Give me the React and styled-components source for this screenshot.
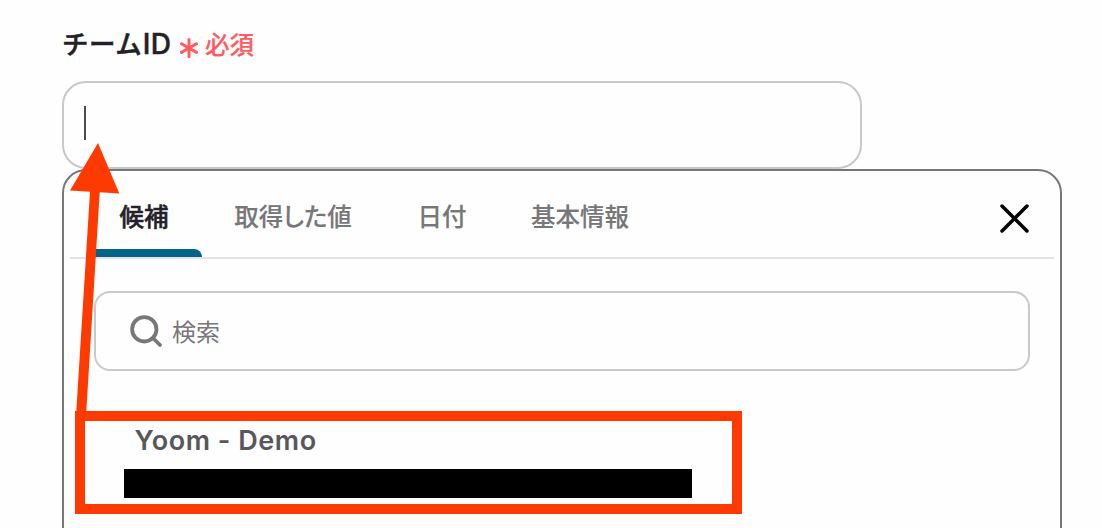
import styled, { createGlobalStyle } from "styled-components";


const tabs = [
    { label: "候補", width: 116, active: true },
    { label: "取得した値", width: 182 },
    { label: "日付", width: 116 },
    { label: "基本情報", width: 160 },
];


const App = () => {
    return <Page>
        <GlobalStyle />

        <FieldLabel>
            <LabelText>チーム<Latin>ID</Latin></LabelText>
            <Asterisk viewBox="0 0 18 20">
                <path d="M9 1.5v17M1.5 5.8l15 8.6M16.5 5.8l-15 8.6" />
            </Asterisk>
            <RequiredText>必須</RequiredText>
        </FieldLabel>

        <TextField><Caret /></TextField>

        <Dropdown>
            <TabBar>
                <TabList>
                    {tabs.map((tab) => (
                        <Tab key={tab.label} $width={tab.width} $active={tab.active}>{tab.label}</Tab>
                    ))}
                </TabList>
                <CloseButton aria-label="close">
                    <svg width="29" height="29" viewBox="0 0 29 29">
                        <path d="M2 2l25 25M27 2L2 27" />
                    </svg>
                </CloseButton>
            </TabBar>

            <SearchBox>
                <SearchIcon viewBox="0 0 34 34">
                    <circle cx="15.3" cy="15.3" r="12.2" />
                    <path d="M24 24l7 7" />
                </SearchIcon>
                <SearchText>検索</SearchText>
            </SearchBox>

            <Option>
                <OptionName>Yoom - Demo</OptionName>
                <Redacted />
            </Option>
        </Dropdown>

        {/* annotations over the form */}
        <Arrow viewBox="0 0 60 280">
            <path d="M33 3L54.3 53.5L34.7 52.3L21 276L11 276L25 51.7L5 50.5Z" />
        </Arrow>
        <Highlight />
    </Page>
}

export default App;

const GlobalStyle = createGlobalStyle`
*{
    box-sizing: border-box;
}
body{
    margin: 0;
    background: #fefefe;
    font-family: "Noto Sans CJK JP", sans-serif;
    overflow: hidden;
}`;

const Page = styled.div`
position: relative;
width: 1102px;
height: 528px;
padding: 24px 40px 0 62px;
overflow: hidden;
`;

const FieldLabel = styled.div`
display: flex;
align-items: center;
height: 40px;
margin-bottom: 17px;
`;

const LabelText = styled.span`
width: 118px;
margin-bottom: 2px;
font-size: 26.5px;
font-weight: 500;
line-height: 40px;
letter-spacing: 0.5px;
color: #222127;
white-space: nowrap;
-webkit-text-stroke: 0.5px #222127;
`;

const Latin = styled.span`
margin-left: 0.5px;
font-family: Inter, sans-serif;
font-size: 28px;
font-weight: 500;
letter-spacing: 0.4px;
`;

const Asterisk = styled.svg`
width: 18px;
height: 20px;
margin: 8px 7px 0 0;
fill: none;
stroke: #ff5b61;
stroke-width: 3;
stroke-linecap: round;
`;

const RequiredText = styled.span`
font-size: 24.5px;
font-weight: 500;
line-height: 40px;
color: #ff5b61;
-webkit-text-stroke: 0.2px #ff5b61;
`;

const TextField = styled.div`
width: 800px;
height: 88px;
padding: 23px 20px;
border: 2px solid #c9c7cb;
border-radius: 24px;
`;

const Caret = styled.div`
width: 2px;
height: 34px;
background: #4c4b50;
`;

const Dropdown = styled.div`
width: 1000px;
height: 420px;
border: 2px solid #777679;
border-radius: 24px;
background: #fefefe;
`;

const TabBar = styled.div`
display: flex;
justify-content: space-between;
height: 88px;
margin: 0 6px;
padding: 0 25.5px 0 16px;
border-bottom: 2px solid #e3e3e4;
`;

const TabList = styled.div`
display: flex;
`;

const Tab = styled.div`
width: ${(props) => props.$width}px;
padding-top: 25px;
text-align: center;
font-size: 24.5px;
font-weight: 500;
font-feature-settings: "palt";
line-height: 40px;
color: ${(props) => (props.$active ? "#222127" : "#777679")};
-webkit-text-stroke: ${(props) => (props.$active ? "0.5px" : "0.15px")} currentColor;

&::after{
    content: "";
    display: ${(props) => (props.$active ? "block" : "none")};
    height: 8px;
    margin-top: 13px;
    border-radius: 8px 8px 0 0;
    background: #036389;
}`;

const CloseButton = styled.button`
all: unset;
height: 29px;
margin-top: 33px;
svg{
    display: block;
    fill: none;
    stroke: #000;
    stroke-width: 3.5;
    stroke-linecap: round;
}`;

const SearchBox = styled.div`
display: flex;
align-items: center;
height: 80px;
margin: 32px 30px 0;
padding: 0 33px;
border: 2px solid #c9c9ca;
border-radius: 16px;
`;

const SearchIcon = styled.svg`
width: 34px;
height: 34px;
margin-right: 9px;
fill: none;
stroke: #777679;
stroke-width: 3.8;
stroke-linecap: round;
`;

const SearchText = styled.span`
font-size: 24px;
line-height: 40px;
color: #777679;
`;

const Option = styled.div`
padding: 50px 60px 0;
`;

const OptionName = styled.div`
height: 48px;
padding-left: 10.5px;
font-family: Inter, sans-serif;
font-size: 27px;
font-weight: 600;
line-height: 40px;
letter-spacing: 0.55px;
color: #58575c;
`;

const Redacted = styled.div`
width: 568px;
height: 29px;
background: #000;
`;

const Arrow = styled.svg`
position: absolute;
left: 65px;
top: 140px;
width: 60px;
height: 280px;
fill: #ff3a00;
`;

const Highlight = styled.div`
position: absolute;
left: 75px;
top: 411px;
width: 667px;
height: 103px;
border: 10px solid #ff3a00;
`;
